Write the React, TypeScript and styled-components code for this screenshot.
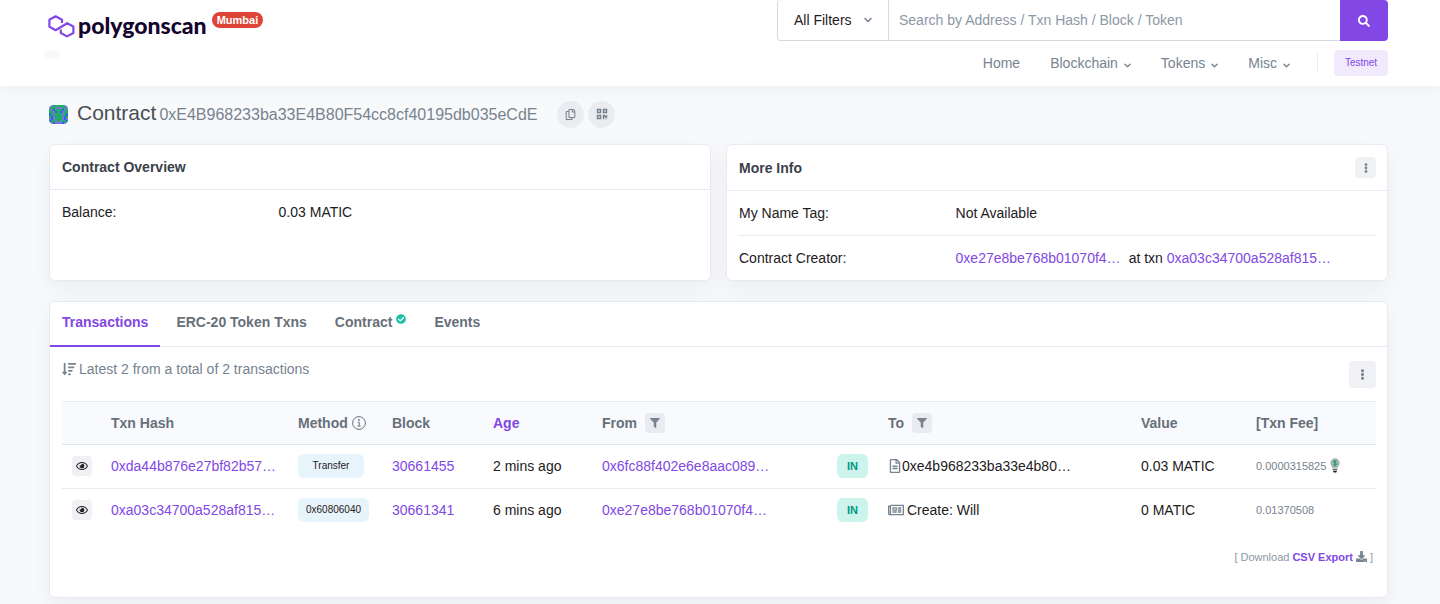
import React from "react";
import styled, { createGlobalStyle } from "styled-components";
import {
  FaCheckCircle,
  FaDownload,
  FaEllipsisV,
  FaFilter,
  FaQrcode,
  FaRegCopy,
  FaRegEye,
  FaRegFileAlt,
  FaRegNewspaper,
  FaSearch,
  FaSortAmountDown,
} from "react-icons/fa";

const purple = "#8247e5";
const muted = "#77838f";
const line = "#e7eaf3";

const GlobalStyle = createGlobalStyle`
  *, *::before, *::after { box-sizing: border-box; }
  body {
    margin: 0;
    background: #f8f9fa;
    color: #1e2022;
    font-family: "Liberation Sans", Arial, sans-serif;
    font-size: 14px;
    line-height: 20px;
  }
  button, input, select { font: inherit; }
  a { color: ${purple}; text-decoration: none; }
  svg { display: block; flex: none; }
`;

const Header = styled.header`
  position: relative;
  display: flex;
  justify-content: space-between;
  align-items: flex-start;
  height: 86px;
  padding: 0 52px 0 48px;
  background: #fff;
  box-shadow: 0 4px 16px rgba(140, 152, 164, 0.09);
`;

const Brand = styled.div`
  display: flex;
  flex-direction: column;
  align-items: flex-start;
  gap: 10px;
  padding-top: 12px;
`;

const LogoLink = styled.a`
  display: flex;
  align-items: flex-start;
  color: #14052e;
  height: 28px;

  svg { margin: 3px 3px 0 0; }
`;

const LogoText = styled.span`
  font-family: Lato, "Open Sans", sans-serif;
  font-size: 23px;
  font-weight: 900;
  line-height: 26px;
`;

const NetworkPill = styled.span`
  margin-left: 5px;
  padding: 0 5px;
  border-radius: 8px;
  background: #de4437;
  color: #fff;
  font-size: 11px;
  font-weight: 700;
  line-height: 16px;
`;

const EmptyPill = styled.span`
  width: 16px;
  height: 9px;
  margin-left: -4px;
  border-radius: 5px;
  background: #f8f9fb;
`;

const HeaderRight = styled.div`
  display: flex;
  flex-direction: column;
  width: 611px;
`;

const SearchForm = styled.form`
  display: flex;
  height: 41px;
`;

const FilterBox = styled.label`
  display: grid;
  align-items: center;
  flex: none;
  width: 112px;
  border: 1px solid #d5dae2;
  border-top: 0;
  border-radius: 4px 0 0 4px;
  color: ${muted};

  select, svg { grid-area: 1 / 1; }
  svg { justify-self: end; margin-right: 16px; pointer-events: none; }
`;

const FilterSelect = styled.select`
  width: 100%;
  height: 39px;
  padding: 0 16px;
  border: 0;
  background: transparent;
  color: #1e2022;
  appearance: none;
`;

const SearchInput = styled.input`
  flex: 1;
  min-width: 0;
  padding: 0 10px;
  border: solid #d5dae2;
  border-width: 0 0 1px;
  background: #fff;
  color: #1e2022;

  &::placeholder { color: #8c98a4; opacity: 1; }
`;

const SearchButton = styled.button`
  display: flex;
  align-items: center;
  justify-content: center;
  width: 48px;
  border: 0;
  border-radius: 0 4px 4px 0;
  background: ${purple};
  color: #fff;
`;

const Nav = styled.nav`
  display: flex;
  align-items: center;
  justify-content: flex-end;
  padding-top: 9px;
`;

const NavLink = styled.a`
  display: flex;
  align-items: center;
  gap: 6px;
  margin-right: 30px;
  color: ${muted};

  &:last-of-type { margin-right: 27px; }
  svg { margin-top: 4px; }
`;

const NavEnd = styled.div`
  display: flex;
  align-items: center;
  gap: 16px;

  &::before {
    content: "";
    width: 1px;
    height: 20px;
    background: ${line};
  }
`;

const TestnetButton = styled.button`
  width: 54px;
  height: 26px;
  padding: 0;
  border: 0;
  border-radius: 4px;
  background: #f0eafc;
  color: ${purple};
  font-size: 10px;
`;

const Main = styled.main`
  padding: 0 52px 7px 49px;
`;

const TitleRow = styled.div`
  display: flex;
  align-items: center;
  height: 58px;
  padding-bottom: 2px;
`;

const Title = styled.h1`
  display: flex;
  align-items: baseline;
  gap: 3px;
  margin: 0 20px 0 9px;
  color: #4a4f55;
  font-size: 21px;
  font-weight: 400;
  line-height: 24px;
`;

const Address = styled.span`
  color: ${muted};
  font-size: 16px;
`;

const RoundButton = styled.button`
  display: flex;
  align-items: center;
  justify-content: center;
  width: 27px;
  height: 27px;
  margin-right: 4px;
  padding: 0;
  border: 0;
  border-radius: 50%;
  background: #ebecef;
  color: ${muted};
`;

const Card = styled.section`
  border: 1px solid ${line};
  border-radius: 6px;
  background: #fff;
  box-shadow: 0 8px 20px rgba(160, 170, 190, 0.14);
`;

const CardGrid = styled.div`
  display: grid;
  grid-template-columns: 1fr 1fr;
  gap: 15px;
  margin-bottom: 20px;
`;

const CardHeader = styled.div`
  display: flex;
  align-items: center;
  justify-content: space-between;
  min-height: 45px;
  padding: 12px 11px 12px 12px;
  border-bottom: 1px solid ${line};
`;

const CardTitle = styled.h2`
  margin: 0;
  color: #3b3f4a;
  font-size: 14px;
  line-height: 20px;
`;

const SquareButton = styled.button<{ $size: number }>`
  display: inline-flex;
  align-items: center;
  justify-content: center;
  width: ${(p) => p.$size}px;
  height: ${(p) => p.$size}px;
  padding: 0;
  border: 0;
  border-radius: 4px;
  background: #f0f1f5;
  color: ${muted};
`;

const FilterButton = styled(SquareButton)`
  background: #e9ebf0;
`;

const EyeButton = styled(SquareButton)`
  color: #1e2022;
  vertical-align: middle;
`;

const InfoList = styled.dl`
  margin: 0 11px 0 12px;
`;

const InfoRow = styled.div`
  display: grid;
  grid-template-columns: 34% 1fr;
  padding: 12px 0;

  & + & { border-top: 1px solid ${line}; }
  dt, dd { margin: 0; }
`;

const AtTxn = styled.span`
  margin-left: 8px;
`;

const Tabs = styled.nav`
  display: flex;
  gap: 4px;
  border-bottom: 1px solid ${line};
`;

const Tab = styled.a<{ $active?: boolean }>`
  display: flex;
  gap: 4px;
  margin-bottom: -1px;
  padding: 10px 12px 13px;
  border-bottom: 2px solid ${(p) => (p.$active ? purple : "transparent")};
  color: ${(p) => (p.$active ? purple : "#677079")};
  font-weight: 700;

  svg { margin-top: 2px; color: #1dbfa5; }
`;

const CardBody = styled.div`
  padding: 12px 11px 31px 12px;
`;

const Toolbar = styled.div`
  display: flex;
  align-items: flex-start;
  justify-content: space-between;
  margin-bottom: 13px;

  button { margin-top: 2px; }
`;

const Summary = styled.p`
  display: flex;
  align-items: center;
  gap: 3px;
  margin: 0;
  color: ${muted};
`;

const Table = styled.table`
  width: 100%;
  table-layout: fixed;
  border-collapse: collapse;

  th, td {
    height: 44px;
    padding: 0 10px;
    text-align: left;
    white-space: nowrap;
  }
  th {
    height: 43px;
    border-top: 1px solid ${line};
    border-bottom: 1px solid #dfe3ee;
    background: #f8fafd;
    color: #677079;
  }
  td { padding-bottom: 2px; }
  tbody tr + tr td { border-top: 1px solid ${line}; }
  th:first-child, td:first-child { padding-left: 0; padding-right: 0; text-align: center; }
`;

const CellLine = styled.span<{ $gap: number }>`
  display: flex;
  align-items: center;
  gap: ${(p) => p.$gap}px;
`;

const GreyIcon = styled.span`
  color: ${muted};
`;

const MethodBadge = styled.span`
  display: inline-block;
  min-width: 66px;
  padding: 0 8px;
  border-radius: 6px;
  background: #e8f4fb;
  font-size: 10px;
  line-height: 24px;
  text-align: center;
  vertical-align: middle;
`;

const InBadge = styled.span`
  display: inline-block;
  width: 31px;
  border-radius: 6px;
  background: #ccf4ed;
  color: #02977e;
  font-size: 11px;
  font-weight: 700;
  line-height: 24px;
  text-align: center;
  vertical-align: middle;
`;

const Fee = styled.span`
  display: flex;
  align-items: center;
  gap: 4px;
  color: ${muted};
  font-size: 11px;
`;

const Download = styled.p`
  display: flex;
  align-items: center;
  justify-content: flex-end;
  gap: 3px;
  margin: 15px 3px 0 0;
  color: #8c98a4;
  font-size: 11px;
  line-height: 18px;

  a { display: flex; align-items: center; gap: 3px; font-weight: 700; }
  svg { color: ${muted}; }
`;

const Chevron = ({ size }: { size: number }) => (
  <svg width={size} height={size} viewBox="0 0 8 8" fill="none" stroke="currentColor" strokeWidth="1.5" strokeLinecap="round" strokeLinejoin="round" aria-hidden="true">
    <path d="M1 2.5L4 5.5L7 2.5" />
  </svg>
);

const PolygonMark = () => (
  <svg width="27" height="23" viewBox="0 0 27 23" fill="none" stroke="#8247e5" strokeWidth="2.2" strokeLinejoin="round" aria-hidden="true">
    <path d="M14 8V4.7L7.6 1.3 1.4 4.7V11.8L7.6 15.2 19.2 8.2 25.4 11.4V18L19 21.4 12.8 18V14.6" />
  </svg>
);

const identiconRows = [
  "gpgggggpg",
  "pggpppggp",
  "gpbgggbpg",
  "ggpbgbpgg",
  "bgpgggpgb",
  "gbpgggpbg",
  "pbpgggpbp",
  "bggpgpggb",
  "gpbpppbpg",
];
const identiconColors: Record<string, string> = { g: "#1fae68", b: "#2f62e8", p: "#7478d4" };

const Identicon = () => (
  <svg width="19" height="19" viewBox="0 0 9 9" aria-hidden="true">
    <clipPath id="avatar-clip">
      <rect width="9" height="9" rx="2" />
    </clipPath>
    <g clipPath="url(#avatar-clip)" shapeRendering="crispEdges">
      {identiconRows.flatMap((row, y) =>
        row.split("").map((c, x) => (
          <rect key={`${x}-${y}`} x={x} y={y} width="1" height="1" fill={identiconColors[c]} />
        ))
      )}
    </g>
  </svg>
);

const InfoIcon = () => (
  <svg width="14" height="14" viewBox="0 0 14 14" fill="none" stroke="#677079" aria-hidden="true">
    <circle cx="7" cy="7" r="6.4" />
    <path d="M5.8 6.2H7.2V10M5.6 10.1H8.6" />
    <circle cx="7" cy="3.9" r="0.9" fill="#677079" stroke="none" />
  </svg>
);

const BulbIcon = () => (
  <svg width="10" height="15" viewBox="0 0 10 15" aria-hidden="true">
    <path d="M5 0.3A4.7 4.7 0 0 0 .3 5C.3 7.3 2.2 8.4 2.6 10.6H7.4C7.8 8.4 9.7 7.3 9.7 5A4.7 4.7 0 0 0 5 .3Z" fill="#a9b3b3" />
    <path d="M6.4 3.4C5.6 2.6 3.7 2.8 3.8 4 3.9 5.2 6.3 4.8 6.3 6.1 6.3 7.3 4.4 7.4 3.5 6.6M5 2V8.3" fill="none" stroke="#15a36c" strokeWidth="1.1" />
    <path d="M2.7 11.1H7.3V12.4H2.7Z" fill="#4a5557" />
    <path d="M3 12.9H7L6.2 14.5H3.8Z" fill="#1e2022" />
  </svg>
);

const columns = [39, 187, 94, 101, 109, 235, 51, 253, 115, 130];

const transactions = [
  {
    hash: "0xda44b876e27bf82b57…",
    method: "Transfer",
    block: "30661455",
    age: "2 mins ago",
    from: "0x6fc88f402e6e8aac089…",
    to: "0xe4b968233ba33e4b80…",
    icon: <FaRegFileAlt size={14} />,
    iconGap: 0,
    value: "0.03 MATIC",
    fee: "0.0000315825",
    saved: true,
  },
  {
    hash: "0xa03c34700a528af815…",
    method: "0x60806040",
    block: "30661341",
    age: "6 mins ago",
    from: "0xe27e8be768b01070f4…",
    to: "Create: Will",
    icon: <FaRegNewspaper size={16} />,
    iconGap: 3,
    value: "0 MATIC",
    fee: "0.01370508",
    saved: false,
  },
];

export default function App() {
  return (
    <>
      <GlobalStyle />
      <Header>
        <Brand>
          <LogoLink href="#">
            <PolygonMark />
            <LogoText>polygonscan</LogoText>
            <NetworkPill>Mumbai</NetworkPill>
          </LogoLink>
          <EmptyPill />
        </Brand>
        <HeaderRight>
          <SearchForm onSubmit={(e) => e.preventDefault()}>
            <FilterBox>
              <FilterSelect aria-label="Search filter">
                <option>All Filters</option>
              </FilterSelect>
              <Chevron size={8} />
            </FilterBox>
            <SearchInput aria-label="Search" placeholder="Search by Address / Txn Hash / Block / Token" />
            <SearchButton type="submit" aria-label="Search">
              <FaSearch size={12} />
            </SearchButton>
          </SearchForm>
          <Nav>
            <NavLink href="#">Home</NavLink>
            {["Blockchain", "Tokens", "Misc"].map((label) => (
              <NavLink href="#" key={label}>
                {label}
                <Chevron size={7} />
              </NavLink>
            ))}
            <NavEnd>
              <TestnetButton>Testnet</TestnetButton>
            </NavEnd>
          </Nav>
        </HeaderRight>
      </Header>

      <Main>
        <TitleRow>
          <Identicon />
          <Title>
            Contract
            <Address>0xE4B968233ba33E4B80F54cc8cf40195db035eCdE</Address>
          </Title>
          <RoundButton aria-label="Copy address">
            <FaRegCopy size={11} />
          </RoundButton>
          <RoundButton aria-label="Show QR code">
            <FaQrcode size={12} />
          </RoundButton>
        </TitleRow>

        <CardGrid>
          <Card>
            <CardHeader>
              <CardTitle>Contract Overview</CardTitle>
            </CardHeader>
            <InfoList>
              <InfoRow>
                <dt>Balance:</dt>
                <dd>0.03 MATIC</dd>
              </InfoRow>
            </InfoList>
          </Card>
          <Card>
            <CardHeader>
              <CardTitle>More Info</CardTitle>
              <SquareButton $size={21} aria-label="More options">
                <FaEllipsisV size={10} />
              </SquareButton>
            </CardHeader>
            <InfoList>
              <InfoRow>
                <dt>My Name Tag:</dt>
                <dd>Not Available</dd>
              </InfoRow>
              <InfoRow>
                <dt>Contract Creator:</dt>
                <dd>
                  <a href="#">0xe27e8be768b01070f4…</a>
                  <AtTxn>
                    at txn <a href="#">0xa03c34700a528af815…</a>
                  </AtTxn>
                </dd>
              </InfoRow>
            </InfoList>
          </Card>
        </CardGrid>

        <Card>
          <Tabs>
            <Tab href="#" $active>Transactions</Tab>
            <Tab href="#">ERC-20 Token Txns</Tab>
            <Tab href="#">
              Contract
              <FaCheckCircle size={10} />
            </Tab>
            <Tab href="#">Events</Tab>
          </Tabs>
          <CardBody>
            <Toolbar>
              <Summary>
                <FaSortAmountDown size={14} />
                Latest 2 from a total of 2 transactions
              </Summary>
              <SquareButton $size={27} aria-label="Table options">
                <FaEllipsisV size={11} />
              </SquareButton>
            </Toolbar>
            <Table>
              <colgroup>
                {columns.map((w, i) => (
                  <col key={i} width={w} />
                ))}
              </colgroup>
              <thead>
                <tr>
                  <th aria-label="Preview" />
                  <th>Txn Hash</th>
                  <th>
                    <CellLine $gap={4}>
                      Method <InfoIcon />
                    </CellLine>
                  </th>
                  <th>Block</th>
                  <th>
                    <a href="#">Age</a>
                  </th>
                  <th>
                    <CellLine $gap={8}>
                      From
                      <FilterButton $size={20} aria-label="Filter by sender">
                        <FaFilter size={10} />
                      </FilterButton>
                    </CellLine>
                  </th>
                  <th aria-label="Direction" />
                  <th>
                    <CellLine $gap={8}>
                      To
                      <FilterButton $size={20} aria-label="Filter by recipient">
                        <FaFilter size={10} />
                      </FilterButton>
                    </CellLine>
                  </th>
                  <th>Value</th>
                  <th>[Txn Fee]</th>
                </tr>
              </thead>
              <tbody>
                {transactions.map((t) => (
                  <tr key={t.hash}>
                    <td>
                      <EyeButton $size={20} aria-label="Preview transaction">
                        <FaRegEye size={12} />
                      </EyeButton>
                    </td>
                    <td>
                      <a href="#">{t.hash}</a>
                    </td>
                    <td>
                      <MethodBadge>{t.method}</MethodBadge>
                    </td>
                    <td>
                      <a href="#">{t.block}</a>
                    </td>
                    <td>{t.age}</td>
                    <td>
                      <a href="#">{t.from}</a>
                    </td>
                    <td>
                      <InBadge>IN</InBadge>
                    </td>
                    <td>
                      <CellLine $gap={t.iconGap}>
                        <GreyIcon>{t.icon}</GreyIcon>
                        {t.to}
                      </CellLine>
                    </td>
                    <td>{t.value}</td>
                    <td>
                      <Fee>
                        {t.fee}
                        {t.saved && <BulbIcon />}
                      </Fee>
                    </td>
                  </tr>
                ))}
              </tbody>
            </Table>
            <Download>
              [ Download
              <a href="#">
                CSV Export <FaDownload size={11} />
              </a>
              ]
            </Download>
          </CardBody>
        </Card>
      </Main>
    </>
  );
}
